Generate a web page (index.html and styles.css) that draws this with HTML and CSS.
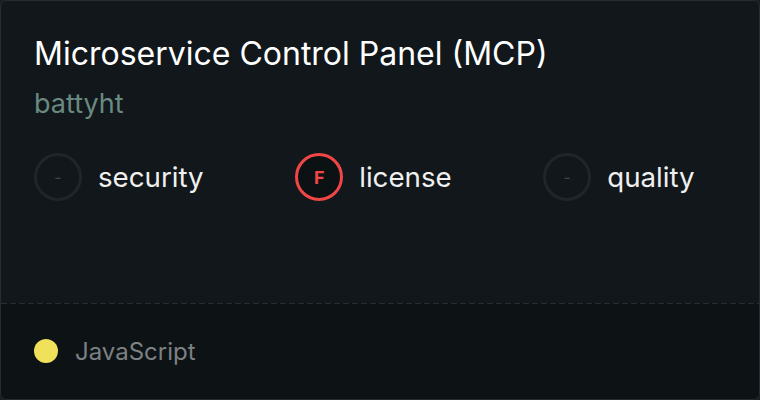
FILE: index.html
```html
<!DOCTYPE html>
<html>
<head>
<meta charset="utf-8">
<link rel="stylesheet" href="styles.css">
</head>
<body>
<div class="card">
  <div class="main">
    <h1 class="title">Microservice Control Panel (MCP)</h1>
    <div class="owner">battyht</div>
    <div class="scores">
      <div class="score">
        <span class="ring ring-none">-</span>
        <span class="label">security</span>
      </div>
      <div class="score">
        <span class="ring ring-f">F</span>
        <span class="label">license</span>
      </div>
      <div class="score">
        <span class="ring ring-none">-</span>
        <span class="label">quality</span>
      </div>
    </div>
  </div>
  <div class="footer">
    <span class="lang-dot"></span>
    <span class="lang">JavaScript</span>
  </div>
</div>
</body>
</html>
```
FILE: styles.css
```css
html, body {
  margin: 0;
  padding: 0;
  background: #1a1f21;
}
body {
  width: 760px;
  height: 400px;
  font-family: Inter, "Noto Sans", sans-serif;
}
.card {
  box-sizing: border-box;
  width: 760px;
  height: 400px;
  border: 1px solid #262c2f;
  border-radius: 7px;
  background: #11171a;
  display: flex;
  flex-direction: column;
  overflow: hidden;
}
.main {
  flex: 1;
  padding: 33px 34px 0 33px;
}
.title {
  margin: 0;
  font-size: 32px;
  font-weight: 400;
  line-height: 40px;
  color: #ffffff;
}
.owner {
  margin-top: 14px;
  font-size: 27px;
  line-height: 32px;
  color: #698a80;
}
.scores {
  display: flex;
  gap: 91.5px;
  margin-top: 33px;
}
.score {
  display: flex;
  align-items: center;
  gap: 16px;
}
.ring {
  box-sizing: border-box;
  width: 48px;
  height: 48px;
  border-radius: 50%;
  border: 3px solid #1f2629;
  display: flex;
  align-items: center;
  justify-content: center;
  font-size: 16px;
  color: #3d4447;
}
.ring-f {
  border-color: #f04646;
  color: #f04646;
  font-size: 18px;
  font-weight: 700;
  background: #0c1114;
}
.label {
  font-size: 27.7px;
  color: #f0f0f0;
}
.footer {
  height: 96px;
  background-image: repeating-linear-gradient(90deg, #262d30 0 6px, transparent 6px 9px);
  background-size: 100% 1px;
  background-repeat: no-repeat;
  background-color: #0d1214;
  display: flex;
  align-items: center;
  padding-left: 33px;
  gap: 17px;
}
.lang-dot {
  width: 24px;
  height: 24px;
  border-radius: 50%;
  background: #f1e05a;
}
.lang {
  font-size: 24px;
  color: #7b8185;
}
```
